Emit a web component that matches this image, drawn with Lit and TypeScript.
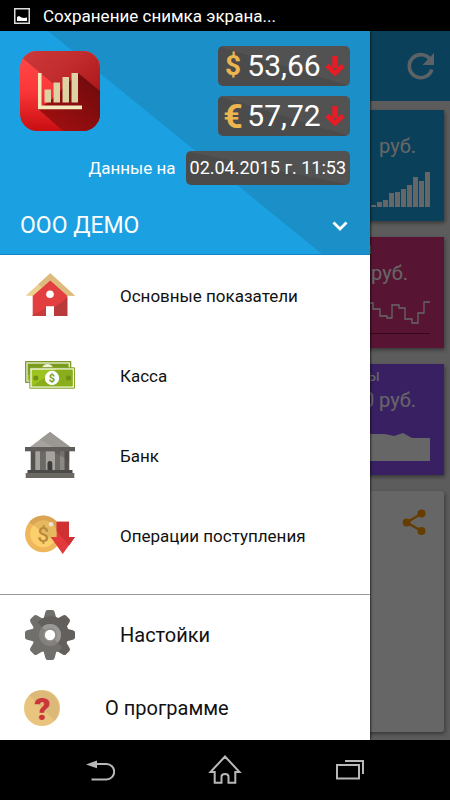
import { LitElement, html, css, svg } from "lit";
import { customElement, property } from "lit/decorators.js";

const reset = css`
  :host {
    box-sizing: border-box;
  }
  *,
  *::before,
  *::after {
    box-sizing: border-box;
  }
  button {
    border: 0;
    padding: 0;
    margin: 0;
    background: none;
    color: inherit;
    font: inherit;
    text-align: left;
    cursor: pointer;
  }
  svg {
    display: block;
    flex: none;
  }
`;

const houseIcon = svg`
  <path d="M7.7 24 25.3 8 42.3 24V45H29V35.3H21V45H7.7Z" fill="#e33f40"/>
  <path d="M42.3 26V45H29V36L36 32Z" fill="#b93a3a"/>
  <path d="M21 37V45H7.7V44Z" fill="#c93a3b"/>
  <path d="M.7 24.7 25.3 2.3 50 24.7H42.5L25.3 9.3 8 24.7Z" fill="#ecd08f"/>
  <path d="M25.3 2.3 50 24.7H42.5L25.3 9.3 17 16.5 13 13.5Z" fill="#dcbb7c"/>
  <circle cx="25" cy="23.3" r="3.8" fill="#fff"/>`;

const cashIcon = svg`
  <rect x="0" y="10" width="46.3" height="22" rx="1" fill="#7f9a2c"/>
  <rect x="2" y="12" width="42.3" height="18" fill="#7a9c1c" stroke="#e3ebc4" stroke-width="1.4"/>
  <path d="M3 24V29H10L16 16 9 22Z" fill="#9dc01d"/>
  <path d="M17 16.5a6 6 0 0 1 11 0Z" fill="#eef2de"/>
  <rect x="4.3" y="16.3" width="45.7" height="21.4" rx="1" fill="#86a42c"/>
  <rect x="6" y="18" width="42.3" height="18" fill="#9dc320" stroke="#f1f6dc" stroke-width="1.4"/>
  <path d="M7 35.300 31 18.700H47.600V35.300Z" fill="#8aad1c"/>
  <circle cx="10.800" cy="27" r="2.500" fill="#6f8f17"/>
  <circle cx="43.500" cy="27" r="2.500" fill="#6f8f17"/>
  <circle cx="27" cy="27" r="7.200" fill="#fff"/>
  <text x="27" y="31" font-family="Roboto, sans-serif" font-size="11" font-weight="700" text-anchor="middle" fill="#7b9c1a">$</text>`;

const bankIcon = svg`
  <path d="M25 1 45.300 16H5Z" fill="#a6a29d"/>
  <path d="M25 1 45.300 16H28L15 8.500Z" fill="#9b9792"/>
  <rect x="5.700" y="20" width="38.600" height="19" fill="#555350"/>
  <rect x="10.300" y="20" width="5" height="19" fill="#a5a39e"/>
  <rect x="20.500" y="20" width="9.500" height="19" fill="#a5a39e"/>
  <rect x="35" y="20" width="4.500" height="19" fill="#8b8883"/>
  <path d="M15.300 20H20.500V39H15.300ZM30 20H35V39H30Z" fill="#6d6a66"/>
  <path d="M22.500 39V32.500a2.400 2.400 0 0 1 4.800 0V39Z" fill="#3d3c3a"/>
  <rect x="0" y="16" width="50" height="4.300" fill="#5f5c59"/>
  <rect x="2.500" y="39" width="45" height="3" fill="#4c4a48"/>
  <rect x=".7" y="42" width="48.600" height="5" fill="#6b6864"/>
  <path d="M28 20.300 44.300 30V20.300Z" fill="#4a4845" opacity=".35"/>`;

const incomeIcon = svg`
  <circle cx="18.300" cy="23" r="18.300" fill="#efb75c"/>
  <path d="M4 11.500A18.300 18.300 0 0 1 36.600 23V30Z" fill="#dba453"/>
  <circle cx="18.300" cy="23" r="13.200" fill="#fbd06c"/>
  <path d="M8.500 14A13.200 13.200 0 0 1 31 27L30 31Z" fill="#e6b95e"/>
  <text x="18.300" y="30.500" font-family="Roboto, sans-serif" font-size="21" font-weight="500" text-anchor="middle" fill="#b98a3e">$</text>
  <circle cx="26" cy="13.300" r="2.300" fill="#ece3d5"/>
  <path d="M31.700 10.700H44V26H50L37.700 43 25.700 26H31.700Z" fill="#e23a3c"/>
  <path d="M31.700 10.700H44V26H50L44 34.500 31.700 20Z" fill="#cf3133"/>`;

const gearIcon = svg`
  ${[0, 45, 90, 135, 180, 225, 270, 315].map(
    (a) => svg`<path d="M18.500 9 20.300 2.200Q20.800 0 22.500 0H27.500Q29.200 0 29.700 2.200L31.500 9Z" fill=${a > 0 && a < 180 ? "#625f5c" : "#716f6b"} transform=${`rotate(${a} 25 25)`}/>`
  )}
  <circle cx="25" cy="25" r="18" fill="#716f6b"/>
  <path d="M12.300 12.300A18 18 0 1 1 37.700 37.700Z" fill="#625f5c"/>
  <circle cx="25" cy="25" r="11" fill="#83807d"/>
  <path d="M17.200 17.200A11 11 0 1 1 32.800 32.800Z" fill="#9a9896"/>
  <circle cx="25" cy="25" r="7" fill="#8d8a88"/>
  <circle cx="25" cy="25" r="5.200" fill="#fff"/>`;

const helpIcon = svg`
  <circle cx="18" cy="20" r="18" fill="#e8c47e"/>
  <path d="M5.300 7.300A18 18 0 0 1 30.700 32.700Z" fill="#dcb979"/>
  <text x="18.500" y="32" font-family="Roboto, sans-serif" font-size="32" font-weight="900" text-anchor="middle" fill="#cc3638">?</text>`;

interface Entry {
  label: string;
  icon: unknown;
}

const sections: Entry[] = [
  { label: "Основные показатели", icon: houseIcon },
  { label: "Касса", icon: cashIcon },
  { label: "Банк", icon: bankIcon },
  { label: "Операции поступления", icon: incomeIcon },
];

@customElement("rate-badge")
export class RateBadge extends LitElement {
  @property() symbol = "";
  @property() value = "";

  static styles = [
    reset,
    css`
      :host {
        display: flex;
        align-items: center;
        width: 132px;
        height: 40px;
        padding: 0 5px;
        border-radius: 5px;
        color: #fff;
        background: linear-gradient(to top right, #4b4b4b 50%, #525252 50%);
      }
      .symbol {
        display: flex;
        justify-content: center;
        width: 20px;
        color: #ebb650;
        font-size: 28px;
        line-height: 40px;
        font-weight: 700;
      }
      .symbol.euro {
        font-size: 34px;
      }
      .value {
        flex: 1;
        text-align: center;
        font-size: 30px;
        line-height: 40px;
      }
    `,
  ];

  render() {
    return html`
      <span class="symbol ${this.symbol === "€" ? "euro" : ""}">${this.symbol}</span>
      <span class="value">${this.value}</span>
      <svg width="20" height="20" viewBox="0 0 20 20" aria-hidden="true">
        <path d="M7.300 0H12.700V12H7.300Z" fill="#e81c24" />
        <path d="M2 9.500 10 17.300 18 9.500" fill="none" stroke="#e81c24" stroke-width="4.600" />
      </svg>
    `;
  }
}

@customElement("dashboard-page")
export class DashboardPage extends LitElement {
  static styles = [
    reset,
    css`
      :host {
        display: flex;
        flex-direction: column;
        background: #e6e6e6;
        color: #fff;
      }
      .toolbar {
        display: flex;
        align-items: center;
        justify-content: flex-end;
        height: 70px;
        padding: 0 14px;
        background: #1ba1e2;
      }
      .cards {
        flex: 1;
        display: flex;
        flex-direction: column;
        gap: 16px;
        padding: 9px 6px 8px;
      }
      .tile,
      .panel {
        display: flex;
        box-shadow: 1px 2px 4px rgba(0, 0, 0, 0.4);
      }
      .tile {
        flex-direction: column;
        align-items: flex-end;
        height: 111px;
        padding: 0 14px 14px;
      }
      .blue {
        background: #1ba1e2;
      }
      .pink {
        background: #dc3280;
      }
      .violet {
        background: #8c52f7;
      }
      .title,
      .amount {
        height: 24px;
        line-height: 24px;
      }
      .title {
        font-size: 16px;
        padding-right: 50px;
      }
      .amount {
        font-size: 20px;
        padding-right: 14px;
      }
      .pink .title {
        padding-right: 58px;
      }
      .pink .amount {
        padding-right: 22px;
      }
      .chart {
        margin-top: auto;
      }
      .panel {
        flex: 1;
        align-items: flex-start;
        justify-content: flex-end;
        padding: 18px;
        border-radius: 3px;
        background: #fff;
      }
    `,
  ];

  render() {
    const bars = [2, 5, 7, 14, 15, 18, 22, 30, 26, 35];
    return html`
      <header class="toolbar">
        <button aria-label="Обновить">
          <svg width="30" height="30" viewBox="0 0 30 30" opacity=".9">
            <path d="M24.800 9.500A11.500 11.500 0 1 0 25.800 18.500" fill="none" stroke="#fff" stroke-width="3.600" />
            <path d="M28 2V14H16.500Z" fill="#fff" />
          </svg>
        </button>
      </header>
      <div class="cards">
        <section class="tile blue">
          <span class="title"></span>
          <span class="amount">руб.</span>
          <svg class="chart" width="60" height="40" viewBox="0 0 60 40">
            ${bars.map((h, i) => svg`<rect x=${i * 6 + 1} y=${40 - h} width="5" height=${h} fill="#fff"/>`)}
          </svg>
        </section>
        <section class="tile pink">
          <span class="title">и</span>
          <span class="amount">руб.</span>
          <svg class="chart" width="60" height="35" viewBox="0 0 60 35">
            <path
              d="M0 4H3V10H10V17H17V19H22V6H29V9H35V20H42V24H48V14H54V3H60"
              fill="none"
              stroke="#fff"
              stroke-width="1.300"
            />
            <path d="M0 34.500H60" stroke="#8a1548" />
          </svg>
        </section>
        <section class="tile violet">
          <span class="title">ы</span>
          <span class="amount">0 руб.</span>
          <svg class="chart" width="60" height="32" viewBox="0 0 60 32">
            <path d="M0 5H15L24 7 33 4 42 9H60V32H0Z" fill="#fff" />
          </svg>
        </section>
        <section class="panel">
          <button aria-label="Поделиться">
            <svg width="24" height="26" viewBox="0 0 24 26">
              <path d="M19.500 4.500 4.700 13.500 19.500 22" fill="none" stroke="#ff9800" stroke-width="2.400" />
              <circle cx="19.500" cy="4.500" r="4" fill="#ff9800" />
              <circle cx="4.700" cy="13.500" r="4" fill="#ff9800" />
              <circle cx="19.500" cy="22" r="4" fill="#ff9800" />
            </svg>
          </button>
        </section>
      </div>
    `;
  }
}

@customElement("app-root")
export class AppRoot extends LitElement {
  static styles = [
    reset,
    css`
      :host {
        display: flex;
        flex-direction: column;
        min-height: 100vh;
        font-family: Roboto, "Noto Sans", sans-serif;
        color: #111;
        background: #000;
      }
      .status {
        display: flex;
        align-items: center;
        gap: 13px;
        height: 31px;
        padding: 0 14px;
        color: #fff;
        font-size: 17px;
        line-height: 24px;
      }
      .screen {
        flex: 1;
        display: grid;
        grid-template-columns: 1fr;
      }
      .behind,
      .drawer {
        grid-area: 1 / 1;
      }
      .behind {
        display: grid;
        position: relative;
      }
      .behind::after {
        content: "";
        position: absolute;
        inset: 0;
        background: rgba(0, 0, 0, 0.6);
      }
      .drawer {
        display: flex;
        flex-direction: column;
        position: relative;
        margin-right: 80px;
        background: #fff;
        box-shadow: 1px 0 2px rgba(0, 0, 0, 0.6);
      }
      .head {
        position: relative;
        isolation: isolate;
        display: flex;
        flex-direction: column;
        height: 224px;
        padding: 15px 20px 0;
        color: #fff;
        background: #1ba1e2;
        border-bottom: 1px solid #0f86c6;
      }
      .head::before {
        content: "";
        position: absolute;
        inset: 0;
        z-index: -1;
        background: #1b8fc8;
        clip-path: polygon(13% 0, 100% 0, 100% 100%, 87% 100%);
      }
      .top {
        display: flex;
        justify-content: space-between;
        align-items: flex-start;
      }
      .logo {
        margin-top: 5px;
      }
      .rates {
        display: flex;
        flex-direction: column;
        gap: 10px;
      }
      .asof {
        display: flex;
        justify-content: flex-end;
        align-items: center;
        gap: 10px;
        margin-top: 15px;
        font-size: 17px;
        line-height: 34px;
      }
      .date {
        padding: 0 4px;
        border-radius: 5px;
        font-size: 18px;
        background: linear-gradient(to top right, #4b4b4b 50%, #525252 50%);
      }
      .account {
        flex: 1;
        display: flex;
        align-items: center;
        justify-content: space-between;
        padding-top: 12px;
        font-size: 23px;
        line-height: 28px;
      }
      .list {
        list-style: none;
        margin: 0;
        padding: 1px 0 18px;
      }
      .extra {
        padding: 0;
        border-top: 1px solid #9a9a9a;
      }
      .item {
        display: flex;
        align-items: center;
        gap: 45px;
        width: 100%;
        height: 80px;
        padding: 0 25px;
        font-size: 17px;
        line-height: 24px;
      }
      .extra .item {
        font-size: 20px;
      }
      .extra .small {
        height: 65px;
        padding: 0 24px;
      }
      .nav {
        display: grid;
        grid-template-columns: repeat(3, 1fr);
        height: 60px;
        padding: 0 38px;
      }
      .nav button {
        display: flex;
        align-items: center;
        justify-content: center;
      }
    `,
  ];

  render() {
    return html`
      <div class="status">
        <svg width="16" height="16" viewBox="0 0 16 16" aria-hidden="true">
          <rect x=".75" y=".75" width="14.500" height="14.500" fill="none" stroke="#ddd" stroke-width="1.500" />
          <path d="M3 13V9L5 8 7.500 9.500 10 10 13 9.500V13Z" fill="#fff" />
        </svg>
        <span>Сохранение снимка экрана...</span>
      </div>
      <main class="screen">
        <div class="behind" inert><dashboard-page></dashboard-page></div>
        <aside class="drawer">
          <header class="head">
            <div class="top">
              <svg class="logo" width="80" height="80" viewBox="0 0 80 80" aria-hidden="true">
                <defs>
                  <linearGradient id="left" x1="0" y1="0" x2="0" y2="1">
                    <stop offset="0" stop-color="#ff4a4a" />
                    <stop offset=".5" stop-color="#fb3638" />
                    <stop offset="1" stop-color="#c80e12" />
                  </linearGradient>
                  <linearGradient id="right" x1="0" y1="0" x2="1" y2="1">
                    <stop offset="0" stop-color="#cc3a3a" />
                    <stop offset=".4" stop-color="#c22c2e" />
                    <stop offset="1" stop-color="#a00c0e" />
                  </linearGradient>
                  <linearGradient id="shade" x1="1" y1="0" x2="0" y2="1">
                    <stop offset="0" stop-color="#6c0a0b" />
                    <stop offset="1" stop-color="#a81012" />
                  </linearGradient>
                  <clipPath id="shape"><rect width="80" height="80" rx="17" /></clipPath>
                </defs>
                <g clip-path="url(#shape)">
                  <rect width="80" height="80" fill="url(#left)" />
                  <path d="M0 5 80 72V0H0Z" fill="url(#right)" />
                  <path d="M58 22 80 40V80H43L18 58 30 50Z" fill="url(#shade)" />
                </g>
                <path d="M18 22H21.500V54.500H62V58.300H18Z" fill="#f3e9be" />
                <path d="M24.500 38.500H31V51.500H24.500ZM33.500 31.500H40V51.500H33.500ZM42.500 26H49V51.500H42.500ZM51.500 22H58V51.500H51.500Z" fill="#dcd2a4" />
              </svg>
              <div class="rates">
                <rate-badge symbol="$" value="53,66"></rate-badge>
                <rate-badge symbol="€" value="57,72"></rate-badge>
              </div>
            </div>
            <div class="asof">
              <span>Данные на</span>
              <time class="date" datetime="2015-04-02T11:53">02.04.2015 г. 11:53</time>
            </div>
            <button class="account">
              <span>ООО ДЕМО</span>
              <svg width="20" height="20" viewBox="0 0 20 20" aria-hidden="true">
                <path d="M3.500 6.500 10 13 16.500 6.500" fill="none" stroke="#fff" stroke-width="2.800" />
              </svg>
            </button>
          </header>
          <nav>
            <ul class="list">
              ${sections.map(
                (s) => html`<li>
                  <button class="item">
                    <svg width="50" height="50" viewBox="0 0 50 50" aria-hidden="true">${s.icon}</svg>
                    <span>${s.label}</span>
                  </button>
                </li>`
              )}
            </ul>
            <ul class="list extra">
              <li>
                <button class="item">
                  <svg width="50" height="50" viewBox="0 0 50 50" aria-hidden="true">${gearIcon}</svg>
                  <span>Настойки</span>
                </button>
              </li>
              <li>
                <button class="item small">
                  <svg width="36" height="40" viewBox="0 0 36 40" aria-hidden="true">${helpIcon}</svg>
                  <span>О программе</span>
                </button>
              </li>
            </ul>
          </nav>
        </aside>
      </main>
      <footer class="nav">
        <button aria-label="Назад">
          <svg width="30" height="30" viewBox="0 0 30 30">
            <path d="M1 9.500 12 5.500V13.300Z" fill="#b8b8b8" />
            <path d="M11 9H21.500A7.700 7.700 0 0 1 21.500 24.400H6.500" fill="none" stroke="#b8b8b8" stroke-width="2" />
          </svg>
        </button>
        <button aria-label="Домой">
          <svg width="34" height="32" viewBox="0 0 34 32">
            <path
              d="M17 2.500 31.500 18H27.300V28.700H20.500V22.500Q20.500 20 17 20T13.500 22.500V28.700H6.700V18H2.500Z"
              fill="none"
              stroke="#b8b8b8"
              stroke-width="2"
            />
          </svg>
        </button>
        <button aria-label="Недавние приложения">
          <svg width="30" height="20" viewBox="0 0 30 20">
            <rect x="2" y="5" width="22" height="13.500" fill="none" stroke="#b8b8b8" stroke-width="2" />
            <path d="M10 1H28V14" fill="none" stroke="#b8b8b8" stroke-width="2" />
          </svg>
        </button>
      </footer>
    `;
  }
}
